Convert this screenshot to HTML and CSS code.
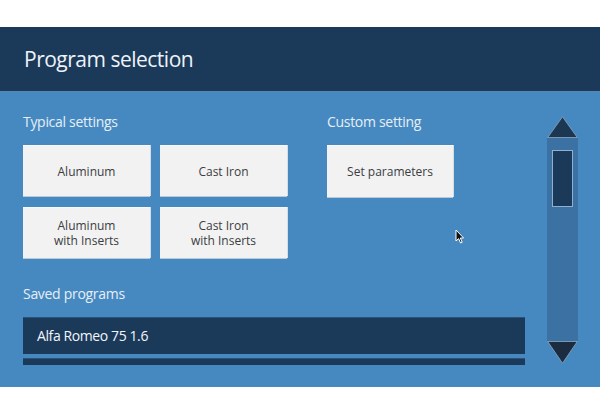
FILE: index.html
```html
<!DOCTYPE html>
<html>
<head>
<meta charset="utf-8">
<link rel="stylesheet" href="styles.css">
</head>
<body>
<div class="app">
  <div class="header"><h1 class="title">Program selection</h1></div>
  <div class="content">
    <div class="main">
      <div class="top">
        <div class="group">
          <div class="label">Typical settings</div>
          <div class="grid">
            <button class="btn">Aluminum</button>
            <button class="btn">Cast Iron</button>
            <button class="btn">Aluminum<br>with Inserts</button>
            <button class="btn">Cast Iron<br>with Inserts</button>
          </div>
        </div>
        <div class="group">
          <div class="label">Custom setting</div>
          <div class="grid single">
            <button class="btn">Set parameters</button>
          </div>
        </div>
      </div>
      <div class="label saved-label">Saved programs</div>
      <div class="list">
        <div class="item">Alfa Romeo 75 1.6</div>
        <div class="item"></div>
      </div>
    </div>
    <div class="scrollbar">
      <svg class="arrow" width="31" height="22" viewBox="0 0 31 22"><polygon points="15.5,0.8 30.3,21.5 0.7,21.5" fill="#1b3752" stroke="#8ea6bd" stroke-width="0.8"/></svg>
      <div class="track"><div class="thumb"></div></div>
      <svg class="arrow" width="31" height="23" viewBox="0 0 31 23"><polygon points="0.7,0.5 30.3,0.5 15.5,22.2" fill="#1b2b40" stroke="#8ea6bd" stroke-width="0.8"/></svg>
    </div>
    <svg class="cursor" width="10" height="15" viewBox="0 0 10 15"><path d="M1 1 L1 12 L3.6 9.6 L5.6 14 L7.2 13.3 L5.3 9 L8.6 9 Z" fill="#111" stroke="#fff" stroke-width="1"/></svg>
  </div>
</div>
</body>
</html>
```

FILE: styles.css
```css
* { box-sizing: border-box; }
html, body { margin: 0; padding: 0; background: #ffffff; }
body { font-family: "Open Sans", "Noto Sans", sans-serif; }

.app { margin-top: 27px; width: 600px; }

.header {
  height: 65px;
  background: #1b3a5a;
  border-bottom: 1px solid #5a85b0;
  display: flex;
  align-items: center;
  padding-left: 24px;
}
.title {
  margin: 0;
  font-weight: 400;
  font-size: 21px;
  color: #eef3f8;
  letter-spacing: -0.5px;
}

.content {
  position: relative;
  height: 295px;
  background: #4689c1;
  display: flex;
  gap: 22px;
  padding: 21px 22px 0 23px;
}

.main { flex: 1; min-width: 0; }

.top { display: flex; gap: 40px; }

.label {
  font-size: 14px;
  line-height: 18px;
  color: #e6eef6;
  letter-spacing: -0.3px;
}

.grid {
  margin-top: 14px;
  display: grid;
  grid-template-columns: 127px 127px;
  grid-auto-rows: 51px;
  column-gap: 10px;
  row-gap: 11px;
}
.grid.single { grid-template-columns: 126px; grid-auto-rows: 52px; }

.btn {
  font-family: "Open Sans", "Noto Sans", sans-serif;
  font-size: 12px;
  line-height: 15px;
  color: #3a3d42;
  background: #f2f2f2;
  border: 0;
  border-top: 1px solid #f8f8f8;
  box-shadow: 0 1px 0 #b9c9d9, 1px 0 0 #d6dde4;
  padding: 0;
  margin: 0;
  text-align: center;
}

.saved-label { margin-top: 27px; }

.list {
  margin-top: 14px;
  height: 48px;
  overflow: hidden;
  display: flex;
  flex-direction: column;
  gap: 4px;
}
.item {
  flex: none;
  height: 37px;
  background: #1b3a5a;
  border-top: 1px solid #2e5178;
  color: #f2f5f9;
  font-size: 14px;
  letter-spacing: -0.4px;
  line-height: 35px;
  padding-left: 14px;
}

.scrollbar {
  width: 31px;
  margin-top: 3px;
  display: flex;
  flex-direction: column;
}
.arrow { display: block; }
.track {
  height: 203px;
  background: #3b72a3;
  padding: 12px 5px 0 5px;
}
.thumb {
  height: 57px;
  background: #1b3a5a;
  border: 1px solid #8fb0d0;
}

.cursor {
  position: absolute;
  left: 455px;
  top: 137px;
}
```
